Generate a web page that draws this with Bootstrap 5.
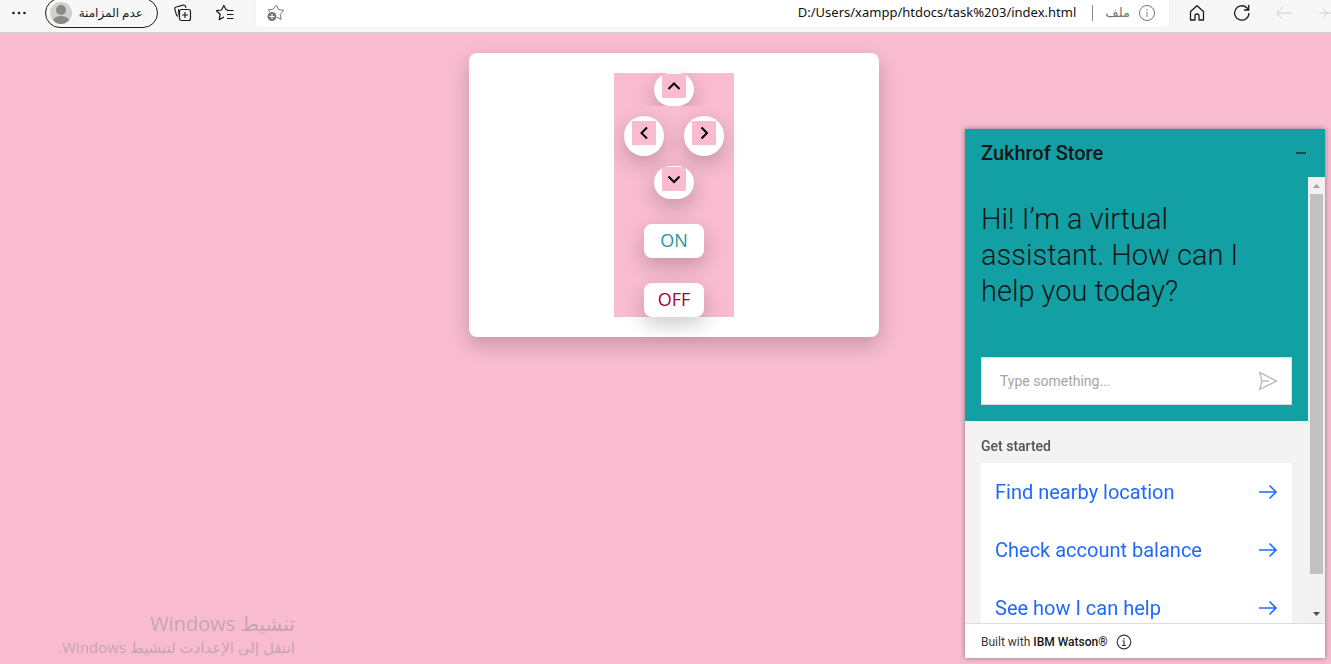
<!DOCTYPE html>
<html lang="en">
<head>
<meta charset="utf-8">
<meta name="viewport" content="width=device-width, initial-scale=1">
<title>Control panel</title>
<link href="https://cdn.jsdelivr.net/npm/bootstrap@5.3.0/dist/css/bootstrap.min.css" rel="stylesheet">
<style>
  body { background: #f8bbd0; font-family: "Open Sans", "DejaVu Sans", sans-serif; min-height: 100vh; overflow: hidden; }
  svg { display: block; fill: none; stroke: currentColor; flex: none; }
  svg.solid { stroke: none; }
  button { font-family: inherit; }
  .plain-btn { background: none; border: 0; padding: 0; color: #1b1b1b; }

  /* browser bar */
  .browser-bar { height: 33px; background: #f7f7f7; border-bottom: 1px solid #d2d2d2; overflow: hidden; padding-bottom: 6px; }
  .profile-btn { width: 113px; height: 30px; border: 1px solid #1b1b1b; border-radius: 15px; background: #f7f7f7; padding: 0 14px 0 4px; font-size: 12px; color: #1b1b1b; margin: 0 16px 0 18px; }
  .tools-start { width: 256px; padding-left: 11px; }
  .address { background: #fff; height: 28px; border-radius: 0 0 4px 4px; padding: 0 13px 0 11px; box-shadow: 0 0 2px rgba(0,0,0,.08); }
  .address-input { border: 0; background: none; outline: 0; min-width: 0; font-family: "Noto Sans", sans-serif; font-size: 13px; text-align: right; color: #111; padding: 0; }
  .divider { width: 1px; height: 16px; background: #8a8a8a; }
  .muted { color: #767676; font-size: 13px; }
  .tools-end { width: 162px; padding-left: 20px; overflow: hidden; }
  .tools-end button { flex: none; }
  .plain-btn.faded { color: #cfcfcf; }
  .plain-btn.star { color: #767676; }

  /* remote control */
  main { padding: 20px 0 0 17px; }
  .remote { width: 410px; padding: 20px; background: #fff; border-radius: 8px; box-shadow: 0 8px 20px rgba(0,0,0,.2); }
  .pad { width: 120px; background: #f8bbd0; }
  .pad-rest { position: relative; background: #f8bbd0; padding-top: 10px; }
  .pad-row { gap: 20px; margin-bottom: 10px; }
  .key { width: 40px; border: 0; background: #fff; border-radius: 20px; color: #000; box-shadow: 0 8px 20px rgba(0,0,0,.2); }
  .key svg { background: #f8bbd0; }
  .key-flat { height: 33px; padding: 1px 8px; }
  .key-round { height: 40px; padding: 5px 8px; }
  .switch-key { width: 60px; height: 34px; border: 0; border-radius: 8px; background: #fff; padding: 0 0 2px; font-size: 18px; line-height: 32px; margin-top: 25px; box-shadow: 0 8px 20px rgba(0,0,0,.2); }
  .on { color: #26969b; }
  .off { color: #a3003c; }

  /* assistant */
  .assistant { position: fixed; top: 129px; right: 6px; bottom: 6px; width: 360px; background: #f3f3f3; font-family: Roboto, sans-serif; color: #161616; box-shadow: 0 0 5px rgba(0,0,0,.4); }
  .teal { background: #13a0a5; }
  .assistant-head { flex: none; height: 48px; padding: 0 18px 0 16px; }
  .assistant-title { font-size: 20px; font-weight: 500; margin: 0; }
  .assistant-scroll { min-height: 0; overflow: hidden; }
  .greeting { padding: 24px 16px 16px; }
  .greeting p { font-size: 29px; line-height: 36px; font-weight: 300; margin: 0 0 48px; }
  .ask { height: 48px; background: #fff; border: 1px solid #dcdcdc; padding: 0 12px 0 18px; }
  .ask input { border: 0; outline: 0; min-width: 0; font-size: 14px; padding: 0; }
  .ask input::placeholder { color: #a5a5a5; opacity: 1; }
  .plain-btn.send { color: #bebebe; }
  .plain-btn.minimize { color: #0d4f52; }
  .start-title { font-size: 14px; line-height: 18px; font-weight: 500; color: #525252; margin: 0 0 8px; }
  .starters { padding: 16px 16px 0; }
  .starter { height: 58px; background: #fff; border: 0; padding: 0 14px; color: #1f69ff; font-size: 20px; }
  .rail { width: 17px; background: #f1f1f1; }
  .rail-thumb { width: 13px; height: 380px; background: #c1c1c1; }
  .assistant-foot { flex: none; height: 35px; background: #fff; border-top: 1px solid #dcdcdc; padding: 2px 16px 0; font-size: 12px; color: #393939; }
  .assistant-foot strong { font-weight: 500; color: #161616; }

  .activation { position: fixed; left: 0; bottom: 7px; width: 295px; color: #c3a5b0; }
  .activation-title { font-size: 20px; line-height: 26px; }
  .activation-text { font-size: 15px; line-height: 20px; }
</style>
</head>
<body>
<header class="browser-bar d-flex align-items-center">
  <div class="tools-start d-flex align-items-center">
    <button class="plain-btn" aria-label="Menu"><svg class="solid" width="16" height="16"><g fill="#1b1b1b"><circle cx="2.500" cy="8" r="1.300"/><circle cx="8" cy="8" r="1.300"/><circle cx="13.500" cy="8" r="1.300"/></g></svg></button>
    <button class="profile-btn d-flex align-items-center justify-content-between">
      <svg class="solid" width="22" height="22" viewBox="0 0 22 22"><circle cx="11" cy="11" r="11" fill="#d2d0ce"/><circle cx="11" cy="8" r="5" fill="#8d8985"/><path d="M3 18q2-4 8-4t8 4q-3 4-8 4t-8-4Z" fill="#8d8985"/></svg>
      <span dir="rtl" lang="ar">عدم المزامنة</span>
    </button>
    <button class="plain-btn" aria-label="Collections"><svg width="18" height="18" viewBox="0 0 18 18" stroke-width="1.200"><path d="M4 12.500 2.500 11 .8 5.200Q.5 3.500 2.200 3L9 1.100q1.800-.5 2.500 1.200l.5 1.500M4.500 5.200 5 11"/><rect x="5.500" y="5.500" width="11" height="11" rx="2"/><path d="M11 8v6M8 11h6"/></svg></button>
    <button class="plain-btn ms-4" aria-label="Favorites"><svg width="20" height="18" viewBox="0 0 20 18" stroke-width="1.200"><path d="m12 6-1.900-.3L7.800 1.500 5.500 6l-5 .7 3.700 3.500-1 5.400L8 13M11 6.500h6.500M11 10.500h6.500M11 14.500h6.500" stroke-linejoin="round"/></svg></button>
  </div>
  <div class="address flex-grow-1 d-flex align-items-center">
    <button class="plain-btn star" aria-label="Add to favorites"><svg width="18" height="18" viewBox="0 0 18 18"><path d="m3 8-2-2 4.800-.7L9.500 1l2 4.500 5.500.8-3.800 3.800.9 5.200-4-2.100" stroke-linejoin="round"/><circle cx="5" cy="12.500" r="4.500" fill="currentColor" stroke="none"/><path d="M5 10v5M2.500 12.500h5" stroke="#fff"/></svg></button>
    <input class="address-input flex-grow-1" aria-label="Address" value="D:/Users/xampp/htdocs/task%203/index.html">
    <span class="divider ms-3 me-2"></span>
    <span class="muted mx-1" dir="rtl" lang="ar">ملف</span>
    <span class="muted ms-1"><svg width="18" height="18"><circle cx="9" cy="9" r="7.500"/><path d="M9 8v5M9 5v1.500"/></svg></span>
  </div>
  <nav class="tools-end d-flex align-items-center gap-4">
    <button class="plain-btn" aria-label="Home"><svg width="16" height="18" viewBox="0 0 16 18" stroke-width="1.300"><path d="M1.500 7.500 8 1.700l6.500 5.800V16H10v-4q0-2-2-2t-2 2v4H1.500Z" stroke-linejoin="round"/></svg></button>
    <button class="plain-btn ms-1" aria-label="Reload"><svg width="18" height="18" viewBox="0 0 18 18" stroke-width="1.300"><path d="M16 9a7.200 7.200 0 1 1-2.200-5.200L16 6M15.700 1v5H11"/></svg></button>
    <button class="plain-btn faded" aria-label="Back"><svg width="18" height="18"><path d="M17 9H2M8 2.500 1.500 9 8 15.500"/></svg></button>
    <button class="plain-btn faded" aria-label="Forward"><svg width="18" height="18"><path d="M1 9h15M5 4.500 9.500 9 5 13.500" transform="translate(1)"/></svg></button>
  </nav>
</header>

<main class="d-flex justify-content-center">
  <section class="remote d-flex justify-content-center">
    <div class="pad">
      <div class="d-flex justify-content-center">
        <button class="key key-flat d-flex align-items-start" aria-label="Up"><svg width="24" height="24" stroke-width="2"><path d="m6.500 15 5.500-5.500 5.500 5.500"/></svg></button>
      </div>
      <div class="pad-rest d-flex flex-column align-items-center">
        <div class="pad-row d-flex">
          <button class="key key-round d-flex align-items-start" aria-label="Left"><svg width="24" height="24" stroke-width="2"><path d="M15 6.500 9.500 12l5.500 5.500"/></svg></button>
          <button class="key key-round d-flex align-items-start" aria-label="Right"><svg width="24" height="24" stroke-width="2"><path d="m9.500 6.500 5.500 5.500-5.500 5.500"/></svg></button>
        </div>
        <button class="key key-flat d-flex align-items-start" aria-label="Down"><svg width="24" height="24" stroke-width="2"><path d="m6.500 9.500 5.500 5.500 5.500-5.500"/></svg></button>
        <button class="switch-key on">ON</button>
        <button class="switch-key off">OFF</button>
      </div>
    </div>
  </section>
</main>

<aside class="assistant d-flex flex-column">
  <div class="assistant-head teal d-flex align-items-center justify-content-between">
    <h1 class="assistant-title">Zukhrof Store</h1>
    <button class="plain-btn minimize" aria-label="Minimize"><svg width="12" height="12" stroke-width="2"><path d="M1 6h10"/></svg></button>
  </div>
  <div class="assistant-scroll flex-grow-1 d-flex">
    <div class="flex-grow-1">
      <div class="greeting teal">
        <p>Hi! I’m a virtual<br>assistant. How can I<br>help you today?</p>
        <div class="ask d-flex align-items-center">
          <input class="flex-grow-1" aria-label="Message" placeholder="Type something...">
          <button class="plain-btn send" aria-label="Send"><svg width="22" height="22" stroke-width="1.400"><path d="m2.700 2.500 17 8.500-17 8.500L5 11Zm2.300 8.500h7"/></svg></button>
        </div>
      </div>
      <div class="starters">
        <h2 class="start-title">Get started</h2>
        <button class="starter w-100 d-flex align-items-center justify-content-between">Find nearby location<svg width="20" height="16" stroke-width="1.600"><path d="M1 8h17M11.500 1.500 18 8l-6.500 6.500"/></svg></button>
        <button class="starter w-100 d-flex align-items-center justify-content-between">Check account balance<svg width="20" height="16" stroke-width="1.600"><path d="M1 8h17M11.500 1.500 18 8l-6.500 6.500"/></svg></button>
        <button class="starter w-100 d-flex align-items-center justify-content-between">See how I can help<svg width="20" height="16" stroke-width="1.600"><path d="M1 8h17M11.500 1.500 18 8l-6.500 6.500"/></svg></button>
      </div>
    </div>
    <div class="rail d-flex flex-column align-items-center">
      <svg class="solid" width="17" height="17"><path d="M5 11h7L8.500 7Z" fill="#a3a3a3"/></svg>
      <div class="rail-thumb"></div>
      <svg class="solid mt-auto" width="17" height="17"><path d="M5 6h7l-3.500 4Z" fill="#505050"/></svg>
    </div>
  </div>
  <footer class="assistant-foot d-flex align-items-center">
    <span>Built with <strong>IBM Watson®</strong></span>
    <svg class="ms-2" width="16" height="16" stroke-width="1.200"><circle cx="8" cy="8" r="6.800"/><path d="M6.500 7H8v4.500M6 11.500h4M8 4v1.500"/></svg>
  </footer>
</aside>

<div class="activation" dir="rtl" lang="ar">
  <div class="activation-title">تنشيط Windows</div>
  <div class="activation-text">انتقل إلى الإعدادت لتنشيط Windows.</div>
</div>
<script src="https://cdn.jsdelivr.net/npm/bootstrap@5.3.0/dist/js/bootstrap.bundle.min.js"></script>
</body>
</html>
